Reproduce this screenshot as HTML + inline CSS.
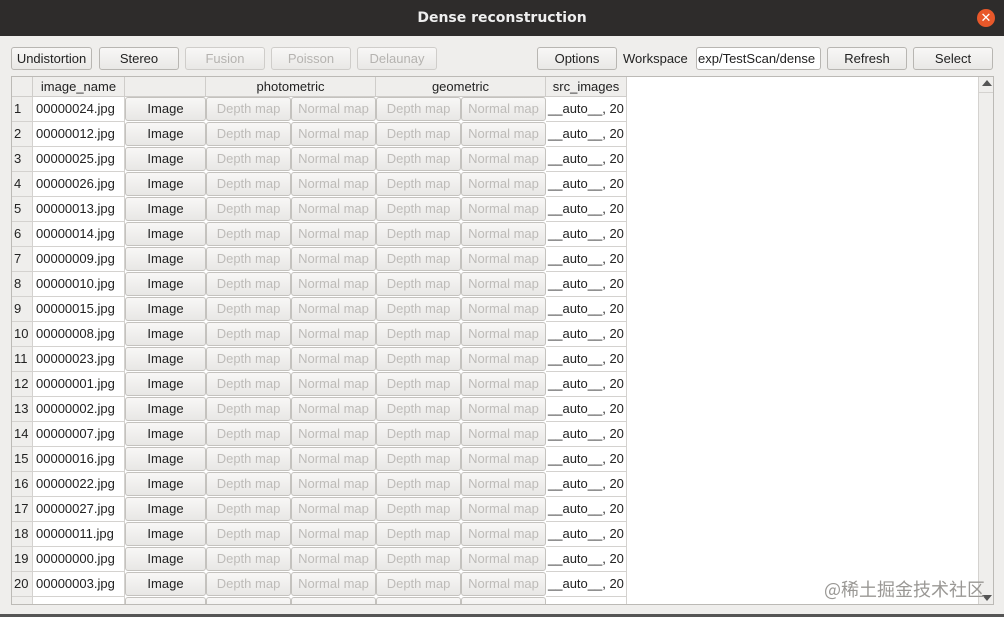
<!DOCTYPE html>
<html><head><meta charset="utf-8"><style>
*{box-sizing:border-box;margin:0;padding:0}
body{width:1004px;height:617px;overflow:hidden;background:#efeeec;font-family:"Liberation Sans","DejaVu Sans",sans-serif;font-size:13px;color:#222;position:relative}
.title{position:absolute;left:0;top:0;width:1004px;height:36px;background:#2e2c2b;color:#eee;font-weight:bold;font-size:14px;text-align:center;line-height:36px;font-family:"DejaVu Sans",sans-serif}
.close{position:absolute;left:977px;top:9px;width:18px;height:18px;border-radius:50%;background:#e8582a;color:#fff;font-size:13px;line-height:18px;text-align:center;font-weight:bold}
.btn{position:absolute;top:47px;height:23px;border:1px solid #b8b6b2;border-radius:3px;background:linear-gradient(#f8f7f6,#e9e8e6);text-align:center;line-height:22px;font-size:13px}
.dis{color:#b5b3b0;border-color:#cfcdca}
.lbl{position:absolute;top:47px;line-height:23px}
.edit{position:absolute;left:696px;top:47px;width:125px;height:23px;border:1px solid #b8b6b2;border-radius:3px;background:#fff;line-height:22px;padding-left:1px;overflow:hidden;white-space:nowrap}
.tbl{position:absolute;left:11px;top:76px;width:983px;height:529px;border:1px solid #bcbab6;background:#fff;overflow:hidden}
.hdr{position:absolute;top:0;height:20px;line-height:19px;text-align:center;background:#efeeec;border-right:1px solid #cfcdca;border-bottom:1px solid #cfcdca}
.row{position:absolute;left:0;height:25px;width:615px}
.c{position:absolute;top:0;height:25px;border-right:1px solid #d4d2cf;border-bottom:1px solid #d4d2cf;line-height:24px;white-space:nowrap;overflow:hidden}
.n{left:0;width:21px;background:#efeeec;padding-left:2px}
.nm{left:21px;width:92px;padding-left:3px}
.b{border:1px solid #c4c2be;border-radius:3px;background:linear-gradient(#f8f7f6,#e8e7e5);text-align:center;height:24px;line-height:22px;margin:0}
.i1{left:113px;width:81px}
.d1{left:194px;width:85px;color:#bdbbb8}
.n1{left:279px;width:85px;color:#bdbbb8}
.d2{left:364px;width:85px;color:#bdbbb8}
.n2{left:449px;width:85px;color:#bdbbb8}
.s{left:534px;width:81px;padding-left:2px}
.sb{position:absolute;left:966px;top:0;width:16px;height:527px;background:#efeeec;border-left:1px solid #d4d2cf}
.wm{position:absolute;left:824px;top:576px;font-family:"Noto Sans CJK SC",sans-serif;font-size:18px;color:#9a9895}
.bot{position:absolute;left:0;top:614px;width:1004px;height:3px;background:#555}
</style></head><body>
<div class="title">Dense reconstruction</div><div class="close">✕</div>
<div class="btn" style="left:11px;width:81px">Undistortion</div>
<div class="btn" style="left:99px;width:80px">Stereo</div>
<div class="btn dis" style="left:185px;width:80px">Fusion</div>
<div class="btn dis" style="left:271px;width:80px">Poisson</div>
<div class="btn dis" style="left:357px;width:80px">Delaunay</div>
<div class="btn" style="left:537px;width:80px">Options</div>
<div class="lbl" style="left:623px">Workspace</div>
<div class="edit">exp/TestScan/dense</div>
<div class="btn" style="left:827px;width:80px">Refresh</div>
<div class="btn" style="left:913px;width:80px">Select</div>
<div class="tbl">
<div class="hdr" style="left:0;width:21px"></div>
<div class="hdr" style="left:21px;width:92px">image_name</div>
<div class="hdr" style="left:113px;width:81px"></div>
<div class="hdr" style="left:194px;width:170px">photometric</div>
<div class="hdr" style="left:364px;width:170px">geometric</div>
<div class="hdr" style="left:534px;width:81px">src_images</div>
<div class="row" style="top:20px"><div class="c n">1</div><div class="c nm">00000024.jpg</div><div class="c b i1">Image</div><div class="c b d1">Depth map</div><div class="c b n1">Normal map</div><div class="c b d2">Depth map</div><div class="c b n2">Normal map</div><div class="c s">__auto__, 20</div></div>
<div class="row" style="top:45px"><div class="c n">2</div><div class="c nm">00000012.jpg</div><div class="c b i1">Image</div><div class="c b d1">Depth map</div><div class="c b n1">Normal map</div><div class="c b d2">Depth map</div><div class="c b n2">Normal map</div><div class="c s">__auto__, 20</div></div>
<div class="row" style="top:70px"><div class="c n">3</div><div class="c nm">00000025.jpg</div><div class="c b i1">Image</div><div class="c b d1">Depth map</div><div class="c b n1">Normal map</div><div class="c b d2">Depth map</div><div class="c b n2">Normal map</div><div class="c s">__auto__, 20</div></div>
<div class="row" style="top:95px"><div class="c n">4</div><div class="c nm">00000026.jpg</div><div class="c b i1">Image</div><div class="c b d1">Depth map</div><div class="c b n1">Normal map</div><div class="c b d2">Depth map</div><div class="c b n2">Normal map</div><div class="c s">__auto__, 20</div></div>
<div class="row" style="top:120px"><div class="c n">5</div><div class="c nm">00000013.jpg</div><div class="c b i1">Image</div><div class="c b d1">Depth map</div><div class="c b n1">Normal map</div><div class="c b d2">Depth map</div><div class="c b n2">Normal map</div><div class="c s">__auto__, 20</div></div>
<div class="row" style="top:145px"><div class="c n">6</div><div class="c nm">00000014.jpg</div><div class="c b i1">Image</div><div class="c b d1">Depth map</div><div class="c b n1">Normal map</div><div class="c b d2">Depth map</div><div class="c b n2">Normal map</div><div class="c s">__auto__, 20</div></div>
<div class="row" style="top:170px"><div class="c n">7</div><div class="c nm">00000009.jpg</div><div class="c b i1">Image</div><div class="c b d1">Depth map</div><div class="c b n1">Normal map</div><div class="c b d2">Depth map</div><div class="c b n2">Normal map</div><div class="c s">__auto__, 20</div></div>
<div class="row" style="top:195px"><div class="c n">8</div><div class="c nm">00000010.jpg</div><div class="c b i1">Image</div><div class="c b d1">Depth map</div><div class="c b n1">Normal map</div><div class="c b d2">Depth map</div><div class="c b n2">Normal map</div><div class="c s">__auto__, 20</div></div>
<div class="row" style="top:220px"><div class="c n">9</div><div class="c nm">00000015.jpg</div><div class="c b i1">Image</div><div class="c b d1">Depth map</div><div class="c b n1">Normal map</div><div class="c b d2">Depth map</div><div class="c b n2">Normal map</div><div class="c s">__auto__, 20</div></div>
<div class="row" style="top:245px"><div class="c n">10</div><div class="c nm">00000008.jpg</div><div class="c b i1">Image</div><div class="c b d1">Depth map</div><div class="c b n1">Normal map</div><div class="c b d2">Depth map</div><div class="c b n2">Normal map</div><div class="c s">__auto__, 20</div></div>
<div class="row" style="top:270px"><div class="c n">11</div><div class="c nm">00000023.jpg</div><div class="c b i1">Image</div><div class="c b d1">Depth map</div><div class="c b n1">Normal map</div><div class="c b d2">Depth map</div><div class="c b n2">Normal map</div><div class="c s">__auto__, 20</div></div>
<div class="row" style="top:295px"><div class="c n">12</div><div class="c nm">00000001.jpg</div><div class="c b i1">Image</div><div class="c b d1">Depth map</div><div class="c b n1">Normal map</div><div class="c b d2">Depth map</div><div class="c b n2">Normal map</div><div class="c s">__auto__, 20</div></div>
<div class="row" style="top:320px"><div class="c n">13</div><div class="c nm">00000002.jpg</div><div class="c b i1">Image</div><div class="c b d1">Depth map</div><div class="c b n1">Normal map</div><div class="c b d2">Depth map</div><div class="c b n2">Normal map</div><div class="c s">__auto__, 20</div></div>
<div class="row" style="top:345px"><div class="c n">14</div><div class="c nm">00000007.jpg</div><div class="c b i1">Image</div><div class="c b d1">Depth map</div><div class="c b n1">Normal map</div><div class="c b d2">Depth map</div><div class="c b n2">Normal map</div><div class="c s">__auto__, 20</div></div>
<div class="row" style="top:370px"><div class="c n">15</div><div class="c nm">00000016.jpg</div><div class="c b i1">Image</div><div class="c b d1">Depth map</div><div class="c b n1">Normal map</div><div class="c b d2">Depth map</div><div class="c b n2">Normal map</div><div class="c s">__auto__, 20</div></div>
<div class="row" style="top:395px"><div class="c n">16</div><div class="c nm">00000022.jpg</div><div class="c b i1">Image</div><div class="c b d1">Depth map</div><div class="c b n1">Normal map</div><div class="c b d2">Depth map</div><div class="c b n2">Normal map</div><div class="c s">__auto__, 20</div></div>
<div class="row" style="top:420px"><div class="c n">17</div><div class="c nm">00000027.jpg</div><div class="c b i1">Image</div><div class="c b d1">Depth map</div><div class="c b n1">Normal map</div><div class="c b d2">Depth map</div><div class="c b n2">Normal map</div><div class="c s">__auto__, 20</div></div>
<div class="row" style="top:445px"><div class="c n">18</div><div class="c nm">00000011.jpg</div><div class="c b i1">Image</div><div class="c b d1">Depth map</div><div class="c b n1">Normal map</div><div class="c b d2">Depth map</div><div class="c b n2">Normal map</div><div class="c s">__auto__, 20</div></div>
<div class="row" style="top:470px"><div class="c n">19</div><div class="c nm">00000000.jpg</div><div class="c b i1">Image</div><div class="c b d1">Depth map</div><div class="c b n1">Normal map</div><div class="c b d2">Depth map</div><div class="c b n2">Normal map</div><div class="c s">__auto__, 20</div></div>
<div class="row" style="top:495px"><div class="c n">20</div><div class="c nm">00000003.jpg</div><div class="c b i1">Image</div><div class="c b d1">Depth map</div><div class="c b n1">Normal map</div><div class="c b d2">Depth map</div><div class="c b n2">Normal map</div><div class="c s">__auto__, 20</div></div>
<div class="row" style="top:520px"><div class="c n"></div><div class="c nm"></div><div class="c b i1"></div><div class="c b d1"></div><div class="c b n1"></div><div class="c b d2"></div><div class="c b n2"></div><div class="c s"></div></div>
<div class="sb"><div style="position:absolute;top:3px;left:3px;width:0;height:0;border-left:5px solid transparent;border-right:5px solid transparent;border-bottom:6px solid #555"></div><div style="position:absolute;top:-1px;left:0;width:16px;height:17px;border-bottom:1px solid #d4d2cf"></div><div style="position:absolute;bottom:3px;left:3px;width:0;height:0;border-left:5px solid transparent;border-right:5px solid transparent;border-top:6px solid #555"></div></div>
</div>
<div class="wm">@稀土掘金技术社区</div>
<div class="bot"></div>
</body></html>
